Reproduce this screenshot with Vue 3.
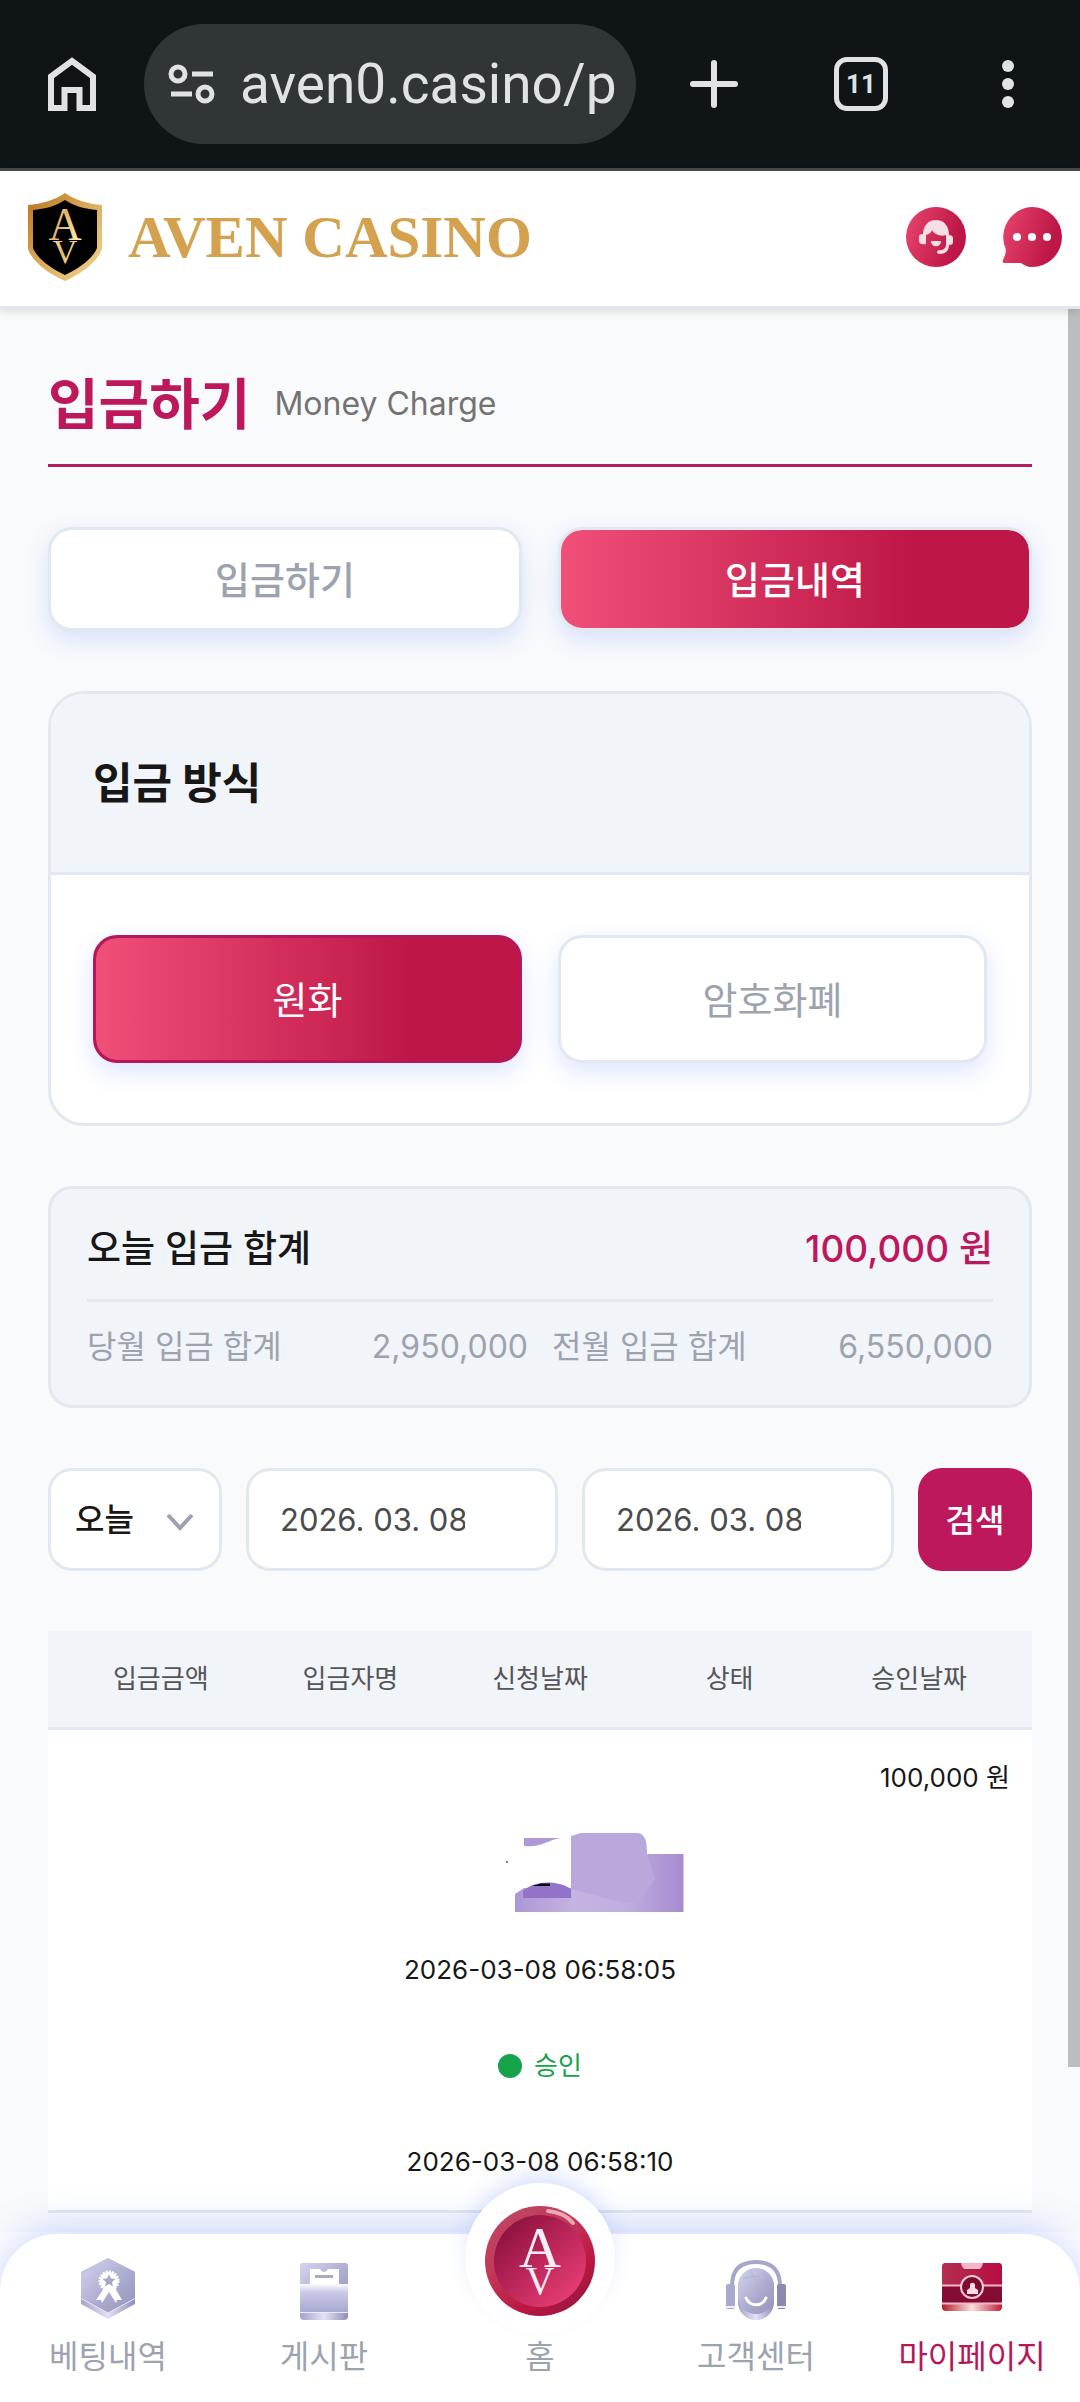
<template>
  <div class="page">
    <div class="browser-bar">
      <button type="button" class="bar-btn" aria-label="Home page">
        <svg width="54" height="60" viewBox="0 0 54 60" fill="none" stroke="#dfe3e6" stroke-width="6">
          <path d="M6 22.500 27 7l21 15.500V54H34.500V36h-15v18H6z" />
        </svg>
      </button>
      <label class="url-box">
        <svg width="48" height="42" viewBox="0 0 48 42" fill="none" stroke="#dfe3e6" stroke-width="5">
          <circle cx="10" cy="11" r="7" />
          <path d="M24 11h21M3 31h21" />
          <circle cx="37" cy="31" r="7" />
        </svg>
        <input v-model="url" type="text" class="url-input" aria-label="Address" />
      </label>
      <div class="bar-actions">
        <button type="button" class="bar-btn" aria-label="New tab">
          <svg width="54" height="54" viewBox="0 0 54 54" stroke="#dfe3e6" stroke-width="6" stroke-linecap="round">
            <path d="M27 6v42M6 27h42" />
          </svg>
        </button>
        <button type="button" class="bar-btn tab-count" aria-label="Tabs">11</button>
        <button type="button" class="bar-btn" aria-label="Menu">
          <svg width="54" height="54" viewBox="0 0 54 54" fill="#dfe3e6">
            <circle cx="27" cy="9" r="6" />
            <circle cx="27" cy="27" r="6" />
            <circle cx="27" cy="45" r="6" />
          </svg>
        </button>
      </div>
    </div>

    <header class="site-header">
      <a href="#" class="logo">
        <svg width="74" height="88" viewBox="0 0 74 88">
          <defs>
            <linearGradient id="gold" x1="0" y1="0" x2="1" y2="1">
              <stop offset="0" stop-color="#b8741a" />
              <stop offset="0.450" stop-color="#dba756" />
              <stop offset="1" stop-color="#efd993" />
            </linearGradient>
            <linearGradient id="goldText" x1="0" y1="0" x2="1" y2="0.600">
              <stop offset="0" stop-color="#fff3bd" />
              <stop offset="0.500" stop-color="#e0b468" />
              <stop offset="1" stop-color="#fff0ad" />
            </linearGradient>
          </defs>
          <path d="M37 0C47 7 60 11 74 12v44C70 68 55 80 37 88 19 80 4 68 0 56V12C14 11 27 7 37 0z" fill="url(#gold)" />
          <path d="M37 7C46 13 57 16 69 17v38C65 65 52 75 37 82 22 75 9 65 5 55V17C17 16 28 13 37 7z" fill="#000" />
          <text x="37" y="47" text-anchor="middle" class="mono-a" font-size="46" fill="url(#goldText)">A</text>
          <text x="37" y="70" text-anchor="middle" class="mono-a" font-size="34" fill="url(#goldText)">V</text>
        </svg>
        <span class="logo-text">AVEN CASINO</span>
      </a>
      <div class="header-actions">
        <button type="button" class="round-btn" aria-label="고객센터">
          <svg width="60" height="60" viewBox="0 0 60 60">
            <defs>
              <linearGradient id="pink" x1="0" y1="0.300" x2="1" y2="0.600">
                <stop offset="0" stop-color="#e5416b" />
                <stop offset="0.850" stop-color="#be1747" />
              </linearGradient>
            </defs>
            <circle cx="30" cy="30" r="30" fill="url(#pink)" />
            <path
              d="M17 28c0-9 5-15 13-15s13 6 13 15c2 0 4 1 4 3v4c0 2-1 3-4 3 0 6-4 9-9 9-4 0-4-4 0-4 4 0 6-2 6-6v-9c-5 2-12-1-14-5-1 3-3 4-6 5v9c-5 1-7-1-7-3v-4c0-2 1-3 4-3z"
              fill="#f5dfe4"
            />
            <path d="M25 34h10c0 7-10 7-10 0z" fill="#f5dfe4" />
          </svg>
        </button>
        <button type="button" class="round-btn" aria-label="채팅">
          <svg width="60" height="60" viewBox="0 0 60 60">
            <path d="M30 0a30 30 0 0 1 0 60c-5 0-8-2-11-4H3c-2 0-3-1-2-3 2-5 4-9 2-13A30 30 0 0 1 30 0z" fill="url(#pink)" />
            <circle cx="15" cy="30" r="4" fill="#fff" />
            <circle cx="30" cy="30" r="4" fill="#fff" />
            <circle cx="45" cy="30" r="4" fill="#fff" />
          </svg>
        </button>
      </div>
    </header>

    <div class="content">
      <main class="main">
        <div class="page-title">
          <h1>입금하기</h1>
          <span>Money Charge</span>
        </div>

        <div class="tabs">
          <button
            v-for="tab in tabs"
            :key="tab"
            type="button"
            class="tab"
            :class="{ active: tab === activeTab }"
            @click="activeTab = tab"
          >
            {{ tab }}
          </button>
        </div>

        <section class="card">
          <h2>입금 방식</h2>
          <div class="methods">
            <button
              v-for="item in methods"
              :key="item"
              type="button"
              class="method"
              :class="{ active: item === method }"
              @click="method = item"
            >
              {{ item }}
            </button>
          </div>
        </section>

        <section class="summary">
          <div class="summary-today">
            <span>오늘 입금 합계</span>
            <strong>100,000 원</strong>
          </div>
          <div class="summary-months">
            <div class="summary-item"><span>당월 입금 합계</span><span>2,950,000</span></div>
            <div class="summary-item"><span>전월 입금 합계</span><span>6,550,000</span></div>
          </div>
        </section>

        <form class="filter" @submit.prevent>
          <div class="select-box">
            <select v-model="period" aria-label="기간">
              <option>오늘</option>
              <option>어제</option>
            </select>
            <svg class="chevron" width="28" height="18" viewBox="0 0 28 18" fill="none" stroke="#9ca3af" stroke-width="4">
              <path d="M2 2l12 13L26 2" />
            </svg>
          </div>
          <input v-model="startDate" type="text" class="date" aria-label="시작일" />
          <input v-model="endDate" type="text" class="date" aria-label="종료일" />
          <button type="submit" class="search">검색</button>
        </form>

        <table class="history">
          <thead>
            <tr>
              <th v-for="col in columns" :key="col">{{ col }}</th>
            </tr>
          </thead>
          <tbody>
            <tr>
              <td class="amount">100,000 원</td>
              <td>
                <svg width="300" height="96" viewBox="390 1826 300 96">
                  <defs>
                    <linearGradient id="maskBase" x1="0" y1="0" x2="1" y2="0">
                      <stop offset="0" stop-color="#ad96d7" />
                      <stop offset="0.350" stop-color="#c5b3e2" />
                      <stop offset="0.650" stop-color="#c0aee0" />
                      <stop offset="1" stop-color="#a58bd0" />
                    </linearGradient>
                  </defs>
                  <path d="M515 1912v-18l9-6h47l77-34h35.500v58z" fill="url(#maskBase)" />
                  <path d="M524 1838h37c-14 2-20 10-37 8z" fill="#ae98d7" />
                  <path d="M571 1836l10-3h57c8 1 9 10 9 21l8 25-16 23-14 1-54-14z" fill="#baa8dd" />
                  <path d="M523 1898v-7c12-11 35-11 48-2v9z" fill="#9273c8" />
                  <path d="M532 1886l9-2.500h9v2.500z" fill="#000" />
                  <circle cx="507" cy="1862" r="1" fill="#555" />
                </svg>
              </td>
              <td>2026-03-08 06:58:05</td>
              <td class="status"><i class="dot"></i>승인</td>
              <td>2026-03-08 06:58:10</td>
            </tr>
          </tbody>
        </table>
      </main>

      <div class="nav-wrap">
        <nav class="bottom-nav">
          <a href="#" class="nav-item">
            <svg width="60" height="64" viewBox="0 0 60 64">
              <defs>
                <linearGradient id="lilac" x1="0" y1="0" x2="1" y2="1">
                  <stop offset="0" stop-color="#d4d5ee" />
                  <stop offset="0.600" stop-color="#a9a8ce" />
                  <stop offset="1" stop-color="#9693b6" />
                </linearGradient>
                <linearGradient id="lilacEdge" x1="0" y1="0" x2="1" y2="0">
                  <stop offset="0" stop-color="#a5a2c9" />
                  <stop offset="0.500" stop-color="#e2e1f7" />
                  <stop offset="1" stop-color="#918db3" />
                </linearGradient>
              </defs>
              <path d="M30 2 57 16v32L30 63 3 48V16z" fill="url(#lilacEdge)" />
              <path d="M30 2 57 16v26L30 57 3 42V16z" fill="url(#lilac)" />
              <path d="M3 42.500 30 57l27-14.500" fill="none" stroke="#e8e8f8" stroke-width="1" />
              <path d="M3 17 30 6M14 10l8 8" stroke="#bfbfdf" fill="none" />
              <path d="M26 32l-8 12h5l1 3 7-11 7 11 1-3h5l-7-12z" fill="#fff" />
              <circle cx="31" cy="25" r="9" fill="#fff" stroke="#fff" stroke-width="3" stroke-dasharray="2 1" />
              <path d="M31 18.500l2 4 4.500.500-3.500 3 1 4.500-4-2.500-4 2.500 1-4.500-3.500-3 4.500-.500z" fill="#a7a6c9" />
            </svg>
            <span>베팅내역</span>
          </a>
          <a href="#" class="nav-item">
            <svg width="60" height="64" viewBox="0 0 60 64">
              <defs>
                <linearGradient id="pocket" x1="0" y1="0" x2="0" y2="1">
                  <stop offset="0" stop-color="#fbfbff" />
                  <stop offset="0.300" stop-color="#c9c9e8" />
                  <stop offset="1" stop-color="#a9a8d0" />
                </linearGradient>
              </defs>
              <rect x="6" y="7" width="48" height="57" rx="4" fill="url(#lilacEdge)" />
              <rect x="6" y="7" width="48" height="50" rx="4" fill="url(#lilac)" />
              <path d="M16 13h10c2 4 6 4 8 0h11v18H16z" fill="#fff" />
              <path d="M21 20.500h18" stroke="#aaa9bd" stroke-width="3" />
              <path d="M6 28h48v28H6z" fill="url(#pocket)" />
              <path d="M6 56.500h48" stroke="#e9e9f8" stroke-width="1" />
            </svg>
            <span>게시판</span>
          </a>
          <a href="#" class="nav-item nav-home">
            <span class="home-disc">
              <svg width="112" height="112" viewBox="0 0 112 112">
                <defs>
                  <linearGradient id="rim" x1="0" y1="0" x2="0.700" y2="1">
                    <stop offset="0" stop-color="#bd4965" />
                    <stop offset="0.420" stop-color="#c23a5a" />
                    <stop offset="0.780" stop-color="#bd1742" />
                    <stop offset="1" stop-color="#9b1740" />
                  </linearGradient>
                  <linearGradient id="disc" x1="0.100" y1="0.100" x2="0.850" y2="0.900">
                    <stop offset="0" stop-color="#8b103d" />
                    <stop offset="0.500" stop-color="#bb265a" />
                    <stop offset="1" stop-color="#e63d73" />
                  </linearGradient>
                </defs>
                <circle cx="56" cy="56" r="55" fill="url(#rim)" />
                <circle cx="56" cy="56" r="46" fill="url(#disc)" />
                <path d="M64 6c11 1 20 6 25 12" fill="none" stroke="#e8a9b8" stroke-width="4" stroke-linecap="round" />
                <text x="56" y="62" text-anchor="middle" class="mono-a" font-size="58" fill="#fdeef4">A</text>
                <text x="56" y="89" text-anchor="middle" class="mono-a" font-size="40" fill="#fdeef4">V</text>
              </svg>
            </span>
            <span>홈</span>
          </a>
          <a href="#" class="nav-item">
            <svg width="60" height="64" viewBox="0 0 60 64">
              <path d="M6 30C6 14 14 6 30 6s24 8 24 24" fill="none" stroke="#a7a6ca" stroke-width="4" />
              <rect x="0" y="28" width="9" height="25" rx="2" fill="#aaa9cd" />
              <rect x="51" y="28" width="9" height="25" rx="2" fill="#8d89ac" />
              <path d="M0 51h9M51 51h9" stroke="#eeeefa" stroke-width="2" />
              <rect x="12" y="13" width="36" height="51" rx="18" fill="url(#lilacEdge)" />
              <rect x="12" y="12" width="36" height="46" rx="18" fill="url(#lilac)" />
              <path d="M17 22l16-2M25 15l6 12" stroke="#b4b3d4" fill="none" />
              <path d="M20 42c4 9 16 9 20 0" fill="none" stroke="#fff" stroke-width="3" stroke-linecap="round" />
            </svg>
            <span>고객센터</span>
          </a>
          <a href="#" class="nav-item current">
            <svg width="60" height="64" viewBox="0 0 60 64">
              <defs>
                <linearGradient id="wallet" x1="0" y1="0" x2="1" y2="0">
                  <stop offset="0" stop-color="#b22f50" />
                  <stop offset="1" stop-color="#b80c43" />
                </linearGradient>
                <linearGradient id="walletEdge" x1="0" y1="0" x2="1" y2="0">
                  <stop offset="0" stop-color="#b21c30" />
                  <stop offset="0.500" stop-color="#fbe1dc" />
                  <stop offset="1" stop-color="#bd2039" />
                </linearGradient>
              </defs>
              <rect x="0" y="7" width="60" height="48" rx="4" fill="url(#walletEdge)" />
              <rect x="0" y="7" width="60" height="40" rx="4" fill="url(#wallet)" />
              <path d="M0 30h60v14q0 3-4 3H4q-4 0-4-3z" fill="#850d35" />
              <path d="M19 7h22c-1 4-2 6-5 6H24c-3 0-4-2-5-6z" fill="#f4b7c8" />
              <path d="M0 29.500h60M0 47.500h60" stroke="#f3b9c7" stroke-width="2" />
              <circle cx="30" cy="31" r="11" fill="#7c0a31" stroke="#f6ccd6" stroke-width="2" />
              <path d="M25 38v-4l3-2v-3c0-3 5-3 5 0v3l3 2v4z" fill="#fbd9e1" />
            </svg>
            <span>마이페이지</span>
          </a>
        </nav>
      </div>
      <div class="scroll-thumb"></div>
    </div>
  </div>
</template>

<script setup>
import { ref } from "vue";

const url = ref("aven0.casino/p");

const tabs = ["입금하기", "입금내역"];
const activeTab = ref("입금내역");

const methods = ["원화", "암호화폐"];
const method = ref("원화");

const period = ref("오늘");
const startDate = ref("2026. 03. 08");
const endDate = ref("2026. 03. 08");

const columns = ["입금금액", "입금자명", "신청날짜", "상태", "승인날짜"];
</script>

<style>
body {
  margin: 0;
  background: #f9fafc;
}
</style>

<style scoped>
.page {
  min-height: 100vh;
  display: flex;
  flex-direction: column;
  font-family: Inter, "Noto Sans CJK KR", sans-serif;
  font-size: 32px;
  color: #171717;
  background: #f9fafc;
}

.page *,
.page *::before {
  box-sizing: border-box;
}

button,
input,
select {
  font: inherit;
  color: inherit;
  margin: 0;
  padding: 0;
  border: 0;
  background: none;
}

svg {
  display: block;
  flex: none;
}

/* browser bar */
.browser-bar {
  height: 171px;
  padding: 0 45px;
  display: flex;
  align-items: center;
  background: #0f1417;
  border-bottom: 3px solid #46484b;
  color: #dfe3e6;
}

.bar-btn {
  width: 54px;
  height: 60px;
  display: flex;
  align-items: center;
  justify-content: center;
}

.url-box {
  flex: 1;
  min-width: 0;
  height: 120px;
  margin-left: 45px;
  padding: 0 16px 0 24px;
  display: flex;
  align-items: center;
  gap: 24px;
  border-radius: 60px;
  background: #303538;
}

.url-input {
  flex: 1;
  width: 0;
  height: 72px;
  font-family: Roboto, sans-serif;
  font-size: 55px;
}

.bar-actions {
  width: 348px;
  margin-left: 51px;
  display: flex;
  justify-content: space-between;
}

.tab-count {
  height: 54px;
  margin: 3px 0;
  border: 5px solid #dfe3e6;
  border-radius: 13px;
  font-family: Roboto, sans-serif;
  font-size: 26px;
  font-weight: 700;
}

/* site header */
.site-header {
  position: relative;
  z-index: 1;
  height: 138px;
  padding: 0 18px 3px 28px;
  display: flex;
  align-items: center;
  justify-content: space-between;
  background: #fff;
  border-bottom: 3px solid #e1e7ef;
  box-shadow: 0 3px 9px rgba(0, 0, 0, 0.12);
}

.logo {
  display: flex;
  align-items: center;
  gap: 26px;
  text-decoration: none;
}

.logo-text {
  font-family: "Liberation Serif", serif;
  font-size: 59px;
  font-weight: 700;
  color: #d4a14f;
}

.mono-a {
  font-family: "Liberation Serif", serif;
}

.header-actions {
  display: flex;
  gap: 36px;
}

.content {
  position: relative;
  flex: 1;
  display: flex;
  flex-direction: column;
}

.main {
  padding: 60px 48px 19px;
}

.page-title {
  display: flex;
  align-items: center;
  gap: 24px;
  padding-bottom: 25px;
  border-bottom: 3px solid #b31c5f;
  line-height: 70px;
}

.page-title h1 {
  margin: 0;
  font-size: 55px;
  font-weight: 700;
  color: #be185d;
}

.page-title span {
  color: #737373;
}

.tabs {
  margin-top: 60px;
  display: grid;
  grid-template-columns: 1fr 1fr;
  gap: 36px;
}

.tab,
.method {
  height: 104px;
  padding-bottom: 4px;
  border: 3px solid #e2e8f0;
  border-radius: 24px;
  background: #fff;
  box-shadow: 0 9px 24px rgba(59, 100, 246, 0.17);
  font-size: 38px;
  font-weight: 500;
  color: #9ca3af;
}

.tab.active {
  color: #fff;
  background:
    linear-gradient(90deg, #f04f78, #be1747 75%) padding-box,
    #e2e8f0;
}

.card {
  margin-top: 60px;
  border: 3px solid #e2e8f0;
  border-radius: 36px;
  background: #fff;
  overflow: hidden;
}

.card h2 {
  margin: 0;
  padding: 60px 42px;
  font-size: 43px;
  line-height: 58px;
  font-weight: 700;
  background: #f1f4f9;
  border-bottom: 3px solid #e2e8f0;
}

.methods {
  padding: 60px 42px;
  display: grid;
  grid-template-columns: 1fr 1fr;
  gap: 36px;
}

.method {
  height: 128px;
  font-weight: 400;
}

.method.active {
  color: #fff;
  border-color: #b5185a;
  background:
    linear-gradient(90deg, #f04f78, #be1747 75%) padding-box,
    #b5185a;
}

.summary {
  margin-top: 60px;
  padding: 30px 36px;
  border: 3px solid #e2e8f0;
  border-radius: 24px;
  background: #f1f4f9;
}

.summary-today {
  display: flex;
  justify-content: space-between;
  padding-bottom: 20px;
  border-bottom: 3px solid #e2e8f0;
  font-size: 37px;
  line-height: 60px;
  font-weight: 500;
}

.summary-today strong {
  font-weight: 500;
  color: #be185d;
}

.summary-months {
  display: grid;
  grid-template-columns: 1fr 1fr;
  gap: 24px;
  padding: 20px 0 3px;
  line-height: 50px;
  color: #9ca3af;
}

.summary-item {
  display: flex;
  justify-content: space-between;
  white-space: nowrap;
}

.filter {
  margin-top: 60px;
  display: grid;
  grid-template-columns: 174px 1fr 1fr 114px;
  gap: 24px;
}

.select-box {
  position: relative;
}

.select-box select,
.date {
  width: 100%;
  height: 103px;
  border: 3px solid #e2e8f0;
  border-radius: 24px;
  background: #fff;
}

.select-box select {
  appearance: none;
  padding-left: 24px;
  font-weight: 500;
}

.chevron {
  position: absolute;
  right: 28px;
  top: 45px;
  pointer-events: none;
}

.date {
  min-width: 0;
  padding: 0 90px 0 31px;
  font-size: 31px;
  color: #4b4b4b;
}

.search {
  padding-bottom: 4px;
  border-radius: 24px;
  font-weight: 500;
  color: #fff;
  background: #be185d;
}

.history {
  display: block;
  margin-top: 60px;
  font-size: 26px;
}

.history thead,
.history tbody {
  display: block;
}

.history thead tr {
  display: grid;
  grid-template-columns: repeat(5, 1fr);
  padding: 0 18px;
  background: #f1f4f9;
  border-bottom: 3px solid #e2e8f0;
}

.history th {
  padding: 0;
  line-height: 96px;
  font-weight: 400;
  color: #555;
}

.history tbody tr {
  display: block;
  background: #fff;
  border-bottom: 3px solid #e2e8f0;
}

.history td {
  height: 96px;
  padding: 0 22px;
  display: flex;
  align-items: center;
  justify-content: center;
  line-height: 96px;
}

.history .amount {
  justify-content: flex-end;
}

.history .status {
  gap: 12px;
  color: #16a34a;
}

.dot {
  width: 24px;
  height: 24px;
  border-radius: 50%;
  background: #16a34a;
}

.nav-wrap {
  position: sticky;
  bottom: 0;
  margin-top: auto;
  padding-top: 2px;
  background: #fff;
}

.bottom-nav {
  height: 168px;
  display: grid;
  grid-template-columns: repeat(5, 1fr);
  background: #fff;
  border-radius: 57px 57px 0 0;
  box-shadow: 0 -3px 42px rgba(59, 100, 246, 0.28);
}

.nav-item {
  display: flex;
  flex-direction: column;
  align-items: center;
  padding-top: 22px;
  gap: 13px;
  line-height: 48px;
  text-decoration: none;
  white-space: nowrap;
  color: #9ca3af;
}

.nav-item.current {
  color: #b5185a;
}

.nav-home {
  padding-top: 0;
  gap: 0;
}

.home-disc {
  width: 150px;
  height: 150px;
  margin-top: -51px;
  padding-top: 6px;
  display: flex;
  align-items: center;
  justify-content: center;
  border-radius: 50%;
  background: #fff;
  box-shadow: 0 -12px 24px -6px rgba(59, 100, 246, 0.22);
}

.scroll-thumb {
  position: absolute;
  top: 0;
  right: 0;
  width: 12px;
  height: 84%;
  background: #bcbdbf;
}
</style>
